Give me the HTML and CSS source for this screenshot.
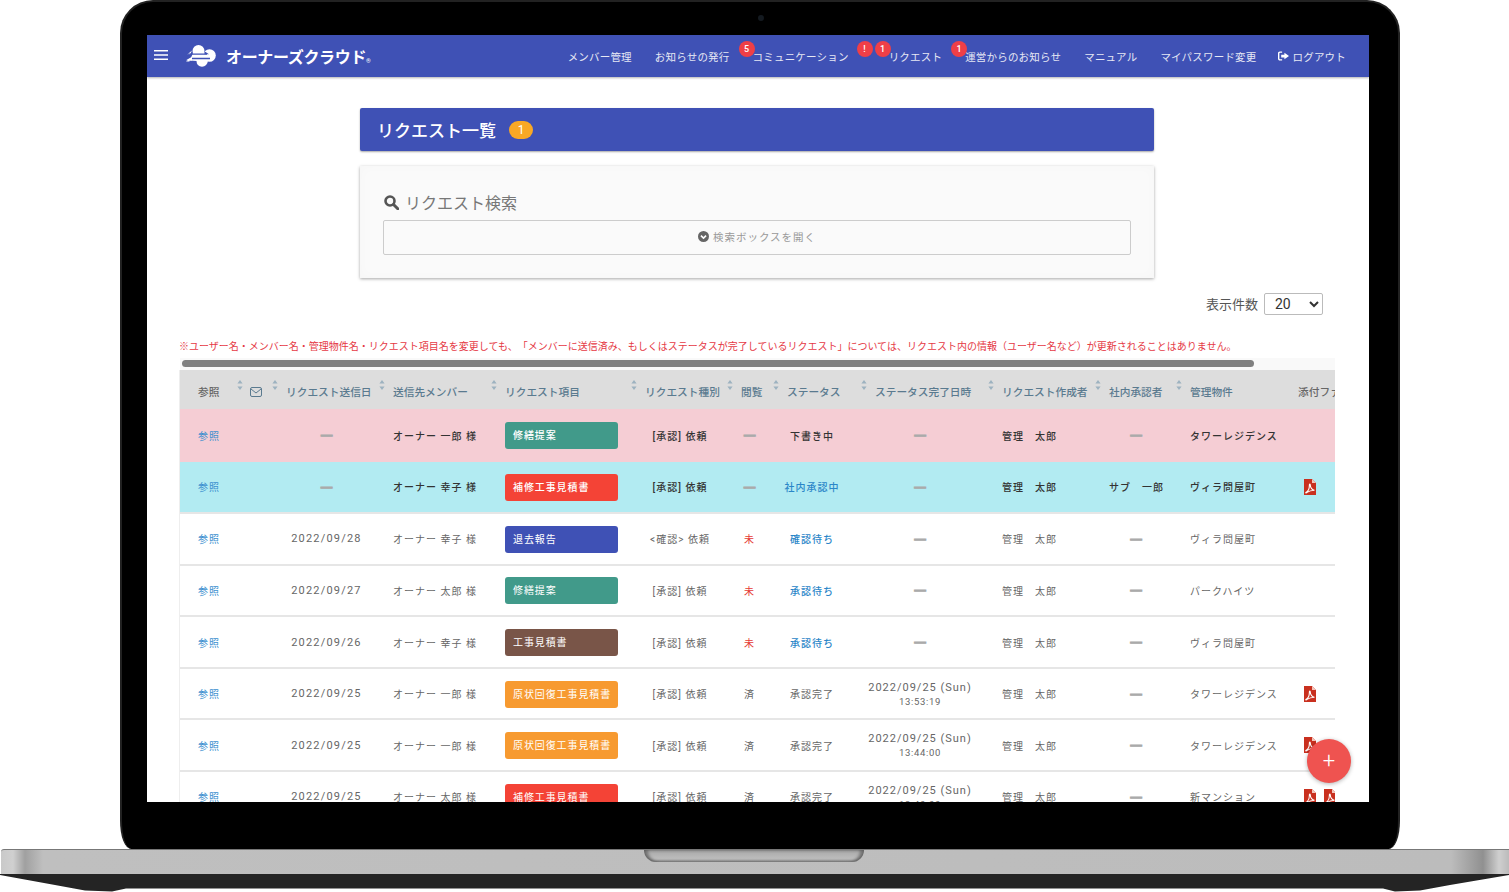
FILE: index.html
```html
<!DOCTYPE html>
<html lang="ja">
<head>
<meta charset="utf-8">
<title>リクエスト一覧</title>
<link rel="stylesheet" href="styles.css">
</head>
<body>
<svg class="defs" width="0" height="0" aria-hidden="true">
  <symbol id="sort" viewBox="0 0 6 10"><path d="M3 0l2.600 3.600H.4zM3 10L.4 6.400h5.200z"/></symbol>
  <symbol id="pdf" viewBox="0 0 12 16">
    <path fill="#c9301f" d="M0 0h8l4 4v12H0z"/>
    <path fill="#f3c6bc" d="M8 0l4 4H8z"/>
    <path fill="none" stroke="#fff" stroke-width="1.100" d="M1.800 13.600c2-1 3.600-4.400 3.600-7.400 0-1.600.9-1.400.9 0 0 2.600 2 4.800 4.200 5-2.400.1-5.200.6-7.400 2.200-.8.6-1.500.5-1.300.2z"/>
  </symbol>
</svg>
<div class="laptop">
  <div class="lid">
    <span class="camera"></span>
    <div class="screen">
      <header class="topbar">
        <svg class="burger" viewBox="0 0 14 10" width="14" height="10"><path d="M0 0h14v1.600H0zM0 4.200h14v1.600H0zM0 8.400h14V10H0z" fill="#fff"/></svg>
        <svg class="cloud" viewBox="0 0 30 22" width="30" height="22">
          <g fill="#fff">
            <circle cx="12.500" cy="6" r="6"/>
            <circle cx="23.500" cy="10.500" r="6.300"/>
            <circle cx="16" cy="16" r="5.800"/>
            <path d="M8 5.500h10v11H5l-5 0 5-3.800zM4 9.500l-2.500-.2L6 5.500z"/>
          </g>
          <path fill="none" stroke="#3f51b5" stroke-width="1.300" d="M2 9.200h19M4.500 13.500h19.500"/>
          <path fill="#3f51b5" d="M18.500 6.200l4.500 3-4.500 0zM3.500 15.500l0 3.500 7 0 0-3z"/>
          <path fill="#fff" d="M0 15.200l6-3.400v3.600z"/>
        </svg>
        <div class="brand">オーナーズクラウド<small>®</small></div>
        <nav class="nav">
          <a>メンバー管理</a>
          <a>お知らせの発行</a>
          <a class="has-badge">コミュニケーション<b class="dot d-comm">5</b><b class="dot d-ex">!</b></a>
          <a class="has-badge req">リクエスト<b class="dot d-req">1</b></a>
          <a class="has-badge">運営からのお知らせ<b class="dot d-op">1</b></a>
          <a>マニュアル</a>
          <a>マイパスワード変更</a>
          <a class="logout"><svg viewBox="0 0 12 10" width="11" height="10"><path fill="#fff" d="M4.500 0H2C.9 0 0 .9 0 2v6c0 1.100.9 2 2 2h2.500V8.500H2.200c-.4 0-.7-.3-.7-.7V2.200c0-.4.3-.7.700-.7h2.300zM7 1.500V3.500H3.500v3H7v2L12 5z"/></svg>ログアウト</a>
        </nav>
      </header>

      <main class="content">
        <h1 class="title">リクエスト一覧<span class="count">1</span></h1>
        <section class="search">
          <h2 class="search-head">
            <svg viewBox="0 0 15 15" width="15" height="15"><circle cx="6" cy="6" r="4.500" fill="none" stroke="#555" stroke-width="2.600"/><path d="M9.500 9.500l4.300 4.300" stroke="#555" stroke-width="3" stroke-linecap="round"/></svg>
            リクエスト検索
          </h2>
          <div class="search-open">
            <svg viewBox="0 0 12 12" width="11" height="11"><circle cx="6" cy="6" r="6" fill="#666"/><path d="M3.200 5l2.800 2.800L8.800 5" fill="none" stroke="#fff" stroke-width="1.700"/></svg>
            検索ボックスを開く
          </div>
        </section>
        <div class="perpage">
          <label for="pp">表示件数</label>
          <select id="pp"><option>20</option></select>
        </div>
        <p class="notice">※ユーザー名・メンバー名・管理物件名・リクエスト項目名を変更しても、「メンバーに送信済み、もしくはステータスが完了しているリクエスト」については、リクエスト内の情報（ユーザー名など）が更新されることはありません。</p>
        <div class="scrolltrack"><div class="thumb"></div></div>
        <div class="tablewrap">
          <table class="grid">
            <colgroup>
              <col class="w1"><col class="w2"><col class="w3"><col class="w4"><col class="w5"><col class="w6"><col class="w7"><col class="w8"><col class="w9"><col class="w10"><col class="w11"><col class="w12"><col class="w13">
            </colgroup>
            <thead>
              <tr>
                <th class="first plain">参照<svg class="s"><use href="#sort"/></svg></th>
                <th class="mail-head"><svg class="mail" viewBox="0 0 12 10" width="12" height="10"><rect x=".5" y=".5" width="11" height="9" rx="1.500" fill="none" stroke="#5a7a8f"/><path d="M1 2l5 4 5-4" fill="none" stroke="#5a7a8f"/></svg><svg class="s"><use href="#sort"/></svg></th>
                <th>リクエスト送信日<svg class="s"><use href="#sort"/></svg></th>
                <th>送信先メンバー<svg class="s"><use href="#sort"/></svg></th>
                <th>リクエスト項目<svg class="s"><use href="#sort"/></svg></th>
                <th>リクエスト種別<svg class="s"><use href="#sort"/></svg></th>
                <th>閲覧<svg class="s"><use href="#sort"/></svg></th>
                <th>ステータス<svg class="s"><use href="#sort"/></svg></th>
                <th>ステータス完了日時<svg class="s"><use href="#sort"/></svg></th>
                <th>リクエスト作成者<svg class="s"><use href="#sort"/></svg></th>
                <th>社内承認者<svg class="s"><use href="#sort"/></svg></th>
                <th>管理物件</th>
                <th class="plain">添付ファイル</th>
              </tr>
            </thead>
            <tbody>
              <tr class="strong pink">
                <td class="first"><a class="link">参照</a></td><td></td>
                <td class="c-date"><span class="dash">—</span></td>
                <td>オーナー 一郎 様</td>
                <td><span class="tag green">修繕提案</span></td>
                <td class="c-kind">[承認] 依頼</td>
                <td class="c-read"><span class="dash">—</span></td>
                <td class="c-status">下書き中</td>
                <td class="c-done"><span class="dash">—</span></td>
                <td>管理　太郎</td>
                <td class="c-appr"><span class="dash">—</span></td>
                <td>タワーレジデンス</td>
                <td class="c-file"></td>
              </tr>
              <tr class="strong cyan">
                <td class="first"><a class="link">参照</a></td><td></td>
                <td class="c-date"><span class="dash">—</span></td>
                <td>オーナー 幸子 様</td>
                <td><span class="tag red">補修工事見積書</span></td>
                <td class="c-kind">[承認] 依頼</td>
                <td class="c-read"><span class="dash">—</span></td>
                <td class="c-status"><a class="link">社内承認中</a></td>
                <td class="c-done"><span class="dash">—</span></td>
                <td>管理　太郎</td>
                <td class="c-appr">サブ　一郎</td>
                <td>ヴィラ問屋町</td>
                <td class="c-file"><svg class="pdf"><use href="#pdf"/></svg></td>
              </tr>
              <tr>
                <td class="first"><a class="link">参照</a></td><td></td>
                <td class="c-date">2022/09/28</td>
                <td>オーナー 幸子 様</td>
                <td><span class="tag indigo">退去報告</span></td>
                <td class="c-kind">&lt;確認&gt; 依頼</td>
                <td class="c-read unread">未</td>
                <td class="c-status"><a class="link bold">確認待ち</a></td>
                <td class="c-done"><span class="dash">—</span></td>
                <td>管理　太郎</td>
                <td class="c-appr"><span class="dash">—</span></td>
                <td>ヴィラ問屋町</td>
                <td class="c-file"></td>
              </tr>
              <tr>
                <td class="first"><a class="link">参照</a></td><td></td>
                <td class="c-date">2022/09/27</td>
                <td>オーナー 太郎 様</td>
                <td><span class="tag green">修繕提案</span></td>
                <td class="c-kind">[承認] 依頼</td>
                <td class="c-read unread">未</td>
                <td class="c-status"><a class="link bold">承認待ち</a></td>
                <td class="c-done"><span class="dash">—</span></td>
                <td>管理　太郎</td>
                <td class="c-appr"><span class="dash">—</span></td>
                <td>パークハイツ</td>
                <td class="c-file"></td>
              </tr>
              <tr>
                <td class="first"><a class="link">参照</a></td><td></td>
                <td class="c-date">2022/09/26</td>
                <td>オーナー 幸子 様</td>
                <td><span class="tag brown">工事見積書</span></td>
                <td class="c-kind">[承認] 依頼</td>
                <td class="c-read unread">未</td>
                <td class="c-status"><a class="link bold">承認待ち</a></td>
                <td class="c-done"><span class="dash">—</span></td>
                <td>管理　太郎</td>
                <td class="c-appr"><span class="dash">—</span></td>
                <td>ヴィラ問屋町</td>
                <td class="c-file"></td>
              </tr>
              <tr>
                <td class="first"><a class="link">参照</a></td><td></td>
                <td class="c-date">2022/09/25</td>
                <td>オーナー 一郎 様</td>
                <td><span class="tag orange">原状回復工事見積書</span></td>
                <td class="c-kind">[承認] 依頼</td>
                <td class="c-read">済</td>
                <td class="c-status">承認完了</td>
                <td class="c-done"><span class="stamp">2022/09/25 (Sun)</span><span class="time">13:53:19</span></td>
                <td>管理　太郎</td>
                <td class="c-appr"><span class="dash">—</span></td>
                <td>タワーレジデンス</td>
                <td class="c-file"><svg class="pdf"><use href="#pdf"/></svg></td>
              </tr>
              <tr>
                <td class="first"><a class="link">参照</a></td><td></td>
                <td class="c-date">2022/09/25</td>
                <td>オーナー 一郎 様</td>
                <td><span class="tag orange">原状回復工事見積書</span></td>
                <td class="c-kind">[承認] 依頼</td>
                <td class="c-read">済</td>
                <td class="c-status">承認完了</td>
                <td class="c-done"><span class="stamp">2022/09/25 (Sun)</span><span class="time">13:44:00</span></td>
                <td>管理　太郎</td>
                <td class="c-appr"><span class="dash">—</span></td>
                <td>タワーレジデンス</td>
                <td class="c-file"><svg class="pdf"><use href="#pdf"/></svg></td>
              </tr>
              <tr>
                <td class="first"><a class="link">参照</a></td><td></td>
                <td class="c-date">2022/09/25</td>
                <td>オーナー 太郎 様</td>
                <td><span class="tag red">補修工事見積書</span></td>
                <td class="c-kind">[承認] 依頼</td>
                <td class="c-read">済</td>
                <td class="c-status">承認完了</td>
                <td class="c-done"><span class="stamp">2022/09/25 (Sun)</span><span class="time">13:40:00</span></td>
                <td>管理　太郎</td>
                <td class="c-appr"><span class="dash">—</span></td>
                <td>新マンション</td>
                <td class="c-file"><svg class="pdf"><use href="#pdf"/></svg><svg class="pdf"><use href="#pdf"/></svg></td>
              </tr>
            </tbody>
          </table>
        </div>
      </main>
      <button class="fab" type="button">+</button>
    </div>
  </div>
  <div class="deck"><span class="notch"></span></div>
  <div class="under"></div>
</div>
</body>
</html>
```
FILE: styles.css
```css
* { box-sizing: border-box; }
html, body { margin: 0; height: 892px; overflow: hidden; background: #fff; }
body { font-family: Roboto, "Noto Sans CJK JP", sans-serif; color: #666; }
.defs { display: block; height: 0; }

.laptop { width: 1509px; height: 892px; }
.lid {
  position: relative;
  width: 1280px;
  height: 849px;
  margin-left: 120px;
  padding: 33px 29px 0 25px;
  background: #000;
  border: 2px solid #222;
  border-bottom: 0;
  border-radius: 33px 33px 11px 11px / 33px 33px 28px 28px;
}
.camera {
  position: absolute;
  left: 636px;
  top: 13px;
  width: 6px;
  height: 6px;
  border-radius: 50%;
  background: #141a20;
}
.screen { position: relative; width: 1222px; height: 767px; overflow: hidden; background: #fff; }

/* top bar */
.topbar {
  display: flex;
  align-items: center;
  height: 42px;
  padding-left: 7px;
  background: #3f51b5;
  box-shadow: 0 1px 2px rgba(0,0,0,.3);
  color: #fff;
}
.burger { flex: none; margin-top: -3px; }
.cloud { flex: none; margin-left: 18px; margin-top: -1px; }
.brand {
  margin-left: 10px;
  margin-top: -1px;
  font-size: 16px;
  font-weight: 700;
  letter-spacing: -.35px;
  white-space: nowrap;
}
.brand small { font-size: 6px; font-weight: 400; }
.nav {
  display: flex;
  align-items: center;
  gap: 23px;
  margin-left: auto;
  padding-right: 23px;
  font-size: 10.5px;
  letter-spacing: .2px;
  white-space: nowrap;
}
.nav a { color: #e6e8f4; }
.has-badge { position: relative; }
.req { margin-left: 17px; }
.logout { display: flex; align-items: center; gap: 4px; margin-left: -2px; }
.dot {
  position: absolute;
  top: -8px;
  width: 16px;
  height: 16px;
  border-radius: 50%;
  background: #ef3f47;
  color: #fff;
  font-size: 9px;
  font-weight: 500;
  letter-spacing: 0;
  line-height: 16px;
  text-align: center;
}
.d-comm { left: -14px; }
.d-ex { left: 104px; }
.d-req { left: -14px; }
.d-op { left: -14px; }

/* page */
.content { display: flex; flex-direction: column; }
.title {
  display: flex;
  align-items: center;
  width: 794px;
  height: 43px;
  margin: 31px auto 0 213px;
  padding: 0 0 1px 17px;
  background: #3f51b5;
  border-radius: 2px;
  box-shadow: 0 1px 2px rgba(0,0,0,.35);
  color: #fff;
  font-size: 17px;
  font-weight: 500;
}
.count {
  width: 24px;
  height: 18px;
  margin: 1px 0 0 13px;
  border-radius: 9px;
  background: #f9a825;
  font-size: 12px;
  font-weight: 400;
  line-height: 18px;
  text-align: center;
}
.search {
  width: 794px;
  height: 112px;
  margin: 15px 0 0 213px;
  padding: 24px 23px 0;
  background: #fafafa;
  box-shadow: 0 1px 3px rgba(0,0,0,.35), inset 0 0 12px rgba(0,0,0,.02);
}
.search-head {
  display: flex;
  align-items: center;
  gap: 6px;
  height: 24px;
  margin: 0 0 6px 1px;
  color: #777;
  font-size: 16px;
  font-weight: 400;
}
.search-open {
  display: flex;
  align-items: center;
  justify-content: center;
  gap: 4px;
  height: 35px;
  padding-bottom: 2px;
  border: 1px solid #ccc;
  border-radius: 2px;
  color: #999;
  font-size: 10.5px;
  letter-spacing: 1px;
}
.perpage {
  display: flex;
  align-items: center;
  justify-content: flex-end;
  gap: 6px;
  height: 22px;
  margin: 15px 46px 0 0;
  color: #555;
  font-size: 13px;
}
.perpage label { margin-top: -2px; }
.perpage select {
  width: 59px;
  height: 22px;
  padding-left: 6px;
  border: 1px solid #bbb;
  border-radius: 2px;
  background: #fff;
  color: #333;
  font: 14px Roboto, sans-serif;
}
.notice {
  margin: 23px 0 0 32px;
  height: 17px;
  color: #e53945;
  font-size: 10px;
  line-height: 17px;
  white-space: nowrap;
  text-spacing-trim: space-all;
}
.scrolltrack {
  width: 1155px;
  height: 12px;
  margin: 3px 0 0 33px;
  padding: 2px 2px 0;
  background: #f9f9f9;
}
.thumb { width: 1072px; height: 7px; border-radius: 4px; background: #808080; }

/* table */
.tablewrap { width: 1156px; margin-left: 32px; overflow: hidden; border-left: 1px solid #eee; }
.grid {
  width: 1220px;
  table-layout: fixed;
  border-collapse: collapse;
  font-size: 10px;
  letter-spacing: 1px;
  white-space: nowrap;
}
.w1 { width: 63px; } .w2 { width: 35px; } .w3 { width: 107px; } .w4 { width: 112px; }
.w5 { width: 140px; } .w6 { width: 96px; } .w7 { width: 46px; } .w8 { width: 88px; }
.w9 { width: 127px; } .w10 { width: 107px; } .w11 { width: 81px; } .w12 { width: 108px; } .w13 { width: 110px; }

.grid th {
  position: relative;
  height: 39px;
  padding: 4px 0 0 8px;
  background: #ddd;
  color: #5a7a8f;
  font-size: 10.7px;
  font-weight: 500;
  letter-spacing: 0;
  text-align: left;
}
.grid th.plain { color: #666; }
.grid th.first, .grid td.first { padding-left: 18px; }
.s { position: absolute; top: 10px; right: 0; width: 6px; height: 10px; fill: #9db2c0; }
.grid th.mail-head { padding-left: 7px; }
.mail { display: block; }

.grid tbody tr { height: 51.57px; border-bottom: 2px solid #e6e6e6; }
.grid td { padding: 0 0 0 8px; color: #666; }
.grid tr.strong td { color: #333; font-weight: 500; }
.grid tr.pink { height: 52.57px; background: #f5cdd4; border-bottom: 0; }
.grid tr.cyan { background: #b2ebf2; }
.grid .link, .grid tr.strong td .link { color: #3b8fcf; font-weight: 400; }
.grid .link.bold, .grid tr.strong .c-status .link { font-weight: 500; color: #2a86c8; }

.c-date, .c-kind, .c-read, .c-status, .c-done, .c-appr { text-align: center; }
.grid .c-date { padding: 0 18px 0 8px; font-size: 11px; letter-spacing: 1.2px; }
.grid .c-kind { padding: 0 18px 0 8px; }
.grid .c-read { padding: 0 21px 0 8px; }
.grid .c-status { padding: 0 22px 0 0; }
.grid .c-done { padding: 0 21px 0 0; }
.grid .c-appr { padding: 0 19px 0 8px; }
.grid .c-file { padding-left: 14px; }
.grid .unread { color: #e53935; }
.dash {
  position: relative;
  top: -1px;
  color: #aaa;
  font-family: "Noto Sans CJK JP", sans-serif;
  font-size: 14px;
  font-weight: 700;
  letter-spacing: 0;
  -webkit-text-stroke: 1px #aaa;
}
.stamp { display: block; font-size: 11px; letter-spacing: 1px; }
.time { display: block; margin-top: 2px; font-size: 9.5px; letter-spacing: .7px; }
.tag {
  display: block;
  width: 113px;
  height: 27px;
  margin-top: 1px;
  padding-left: 8px;
  border-radius: 3px;
  color: #fff;
  letter-spacing: .9px;
  line-height: 27px;
}
.green { background: #419a8a; }
.red { background: #f44336; }
.indigo { background: #3f51b5; }
.brown { background: #795548; }
.orange { background: #f79a30; }
.pdf { display: inline-block; width: 12px; height: 16px; margin-right: 8px; vertical-align: middle; }

.fab {
  position: absolute;
  left: 1160px;
  top: 704px;
  width: 44px;
  height: 44px;
  padding: 0;
  border: 0;
  border-radius: 50%;
  background: #ef5350;
  box-shadow: 0 1px 4px rgba(0,0,0,.3);
  color: #fff;
  font: 300 22px/44px Roboto, sans-serif;
}

/* base */
.deck {
  height: 25px;
  margin-left: 1px;
  border-radius: 3px 0 0 0;
  border-top: 1px solid #777;
  background: linear-gradient(90deg, #c9c9c9 0, #d0d0d0 12px, #a0a0a0 24px, #bfbfbf 42px, #bcbcbc 1450px, #909090 1482px, #cfcfcf 1498px, #bbb 100%);
}
.notch {
  display: block;
  width: 220px;
  height: 12px;
  margin-left: 643px;
  border-radius: 0 0 12px 12px;
  background: linear-gradient(#a8a8a8, #c4c4c4);
  box-shadow: inset 0 -2px 2px rgba(0,0,0,.2), inset 4px 0 3px rgba(0,0,0,.3), inset -4px 0 3px rgba(0,0,0,.3);
}
.under {
  height: 18px;
  background: #242424;
  clip-path: polygon(0 0, 1509px 0, 1509px 1px, 1450px 11px, 1420px 16.500px, 1395px 17.500px, 1383px 14.500px, 126px 14.500px, 112px 17.500px, 85px 16.500px, 55px 11px, 0 1px);
}
```
